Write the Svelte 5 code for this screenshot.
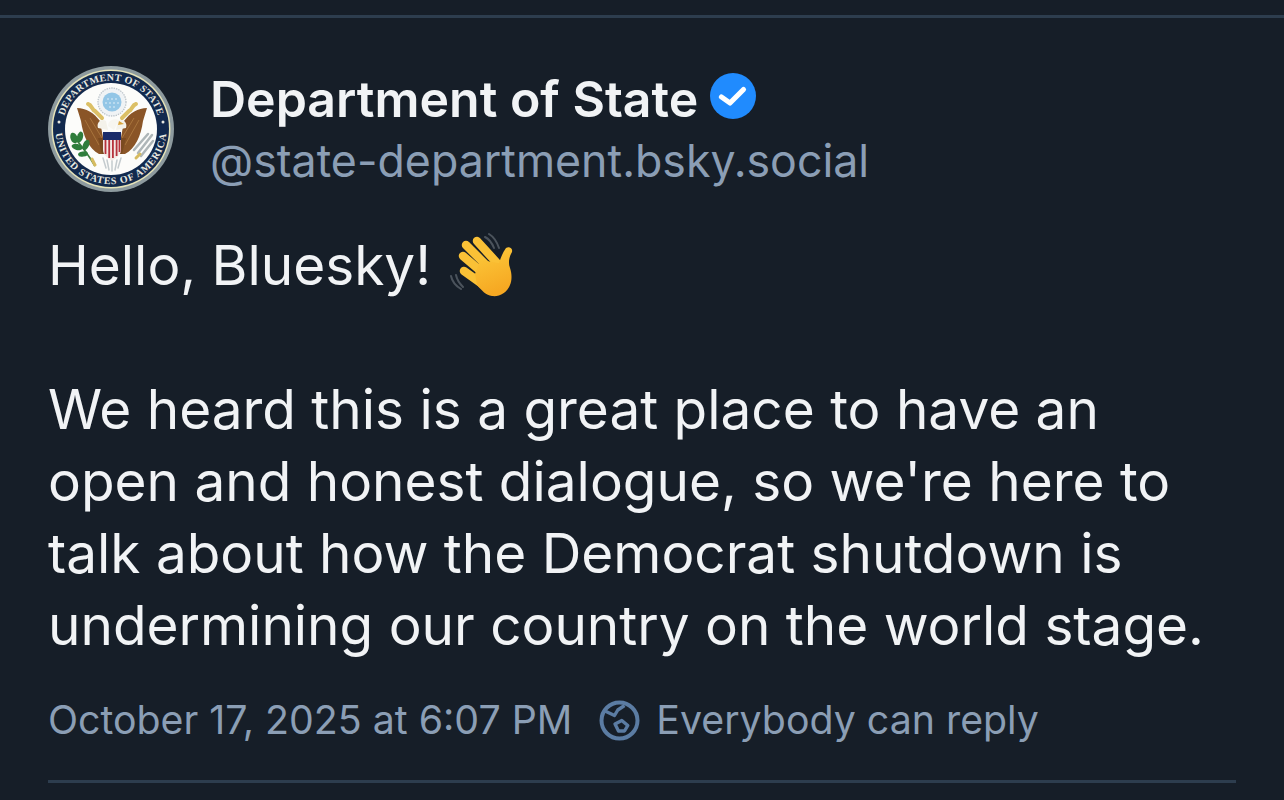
<script>
  const bodyLines = [
    'We heard this is a great place to have an',
    "open and honest dialogue, so we're here to",
    'talk about how the Democrat shutdown is',
    'undermining our country on the world stage.'
  ];
</script>

<main class="page">
  <div class="top-rule"></div>
  <section class="post">
    <header class="author">
      <svg class="seal" viewBox="0 0 126 126" role="img" aria-label="Department of State seal">
        <defs>
          <path id="arcTop" d="M 14.500 63 A 48.500 48.500 0 0 1 111.500 63" />
          <path id="arcBottom" d="M 7.700 58 A 55.500 55.500 0 1 0 118.300 58" />
          <linearGradient id="palm" x1="0" y1="0" x2="0.3" y2="1">
            <stop offset="0" stop-color="#fccb3c" />
            <stop offset="1" stop-color="#f6a822" />
          </linearGradient>
        </defs>
        <circle cx="63" cy="63" r="63" fill="#8d9a9e" />
        <circle cx="63" cy="63" r="59.500" fill="#e6e3b8" />
        <circle cx="63" cy="63" r="58" fill="#12294d" />
        <circle cx="63" cy="63" r="46" fill="#fcfcfa" />
        <text class="seal-text top"><textPath href="#arcTop" startOffset="50%" text-anchor="middle">DEPARTMENT OF STATE</textPath></text>
        <text class="seal-text bottom"><textPath href="#arcBottom" startOffset="50%" text-anchor="middle">UNITED STATES OF AMERICA</textPath></text>
        <circle cx="11" cy="56" r="1.500" fill="#e8e8e0" />
        <circle cx="115" cy="56" r="1.500" fill="#e8e8e0" />

        <circle cx="64" cy="36" r="14" fill="#f0f3f5" stroke="#bcc4ca" stroke-width="1.300" stroke-dasharray="1.400 1" />
        <circle cx="64" cy="36" r="9.500" fill="#93c6e6" />
        <g fill="#eaf4fa">
          <circle cx="60" cy="33" r="0.800" /><circle cx="64" cy="33" r="0.800" /><circle cx="68" cy="33" r="0.800" />
          <circle cx="58" cy="37" r="0.800" /><circle cx="62" cy="37" r="0.800" /><circle cx="66" cy="37" r="0.800" /><circle cx="70" cy="37" r="0.800" />
          <circle cx="62" cy="41" r="0.800" /><circle cx="66" cy="41" r="0.800" />
        </g>

        <path d="M29 42 C38 42 46 47 52 55 L58 88 L51 88 C41 83 35 70 33 55 Z" fill="#8a5527" />
        <path d="M99 42 C90 42 82 47 76 55 L70 88 L77 88 C87 83 93 70 95 55 Z" fill="#8a5527" />
        <path d="M37 54 L51 79 M42 52 L54 72 M91 54 L77 79 M86 52 L74 72" stroke="#a8743c" stroke-width="1" fill="none" />
        <path d="M40 38 C44 39 44 44 47 45 L54 52 M88 38 C84 39 84 44 81 45 L74 52" fill="none" stroke="#dcc066" stroke-width="4" stroke-linecap="round" />
        <path d="M50 62 C48 56 54 52 58 55 L60 64 Z M78 62 C80 56 74 52 70 55 L68 64 Z" fill="#f4f2ea" />
        <path d="M60 60 C60 54 66 52 71 54 L75 57 L69 58 L66 64 Z" fill="#f7f6f0" />
        <path d="M71 55 L76 58 L70 59 Z" fill="#d9a63f" />

        <path d="M50 72 L54 88 L74 88 L78 72 Z" fill="#7a4a20" />
        <rect x="55" y="66" width="18" height="8" fill="#1b2c6a" />
        <path d="M55 74 h18 v10 c0 5 -5 8 -9 11 c-4 -3 -9 -6 -9 -11 z" fill="#f3e8e4" />
        <path d="M57.500 74 v14 M61.200 74 v18 M64.900 74 v18 M68.600 74 v16 M71.500 74 v12" stroke="#b6323c" stroke-width="1.800" />

        <path d="M25 70 C32 78 40 88 47 100" stroke="#3c7d3f" stroke-width="1.800" fill="none" />
        <g fill="#2f7d3c">
          <ellipse cx="26" cy="72" rx="3.500" ry="5.500" transform="rotate(-20 26 72)" />
          <ellipse cx="32" cy="71" rx="3" ry="5.500" transform="rotate(15 32 71)" />
          <ellipse cx="29" cy="81" rx="5.500" ry="3" transform="rotate(15 29 81)" />
          <ellipse cx="38" cy="79" rx="3" ry="5.500" transform="rotate(25 38 79)" />
          <ellipse cx="35" cy="88" rx="5" ry="2.600" transform="rotate(-10 35 88)" />
        </g>
        <path d="M44 93 L47 99" stroke="#d6bb60" stroke-width="3" stroke-linecap="round" />
        <path d="M104 69 L90 87 M100 68 L86 84 M105 75 L93 90" stroke="#aeb6b8" stroke-width="2.500" stroke-linecap="round" />
        <path d="M92 88 L88 92" stroke="#d6bb60" stroke-width="3" stroke-linecap="round" />
        <path d="M55 92 L58 102 M59 94 L61 104 M64 95 L64 105 M69 94 L67 104 M73 92 L70 102" stroke="#c4cbce" stroke-width="1.500" stroke-linecap="round" />
      </svg>
      <div class="identity">
        <div class="name-row">
          <span class="name">Department of State</span>
          <svg class="verified" viewBox="0 0 46 46" aria-hidden="true">
            <circle cx="23" cy="23" r="23" fill="#208bfe" />
            <path d="M11.500 24 L20 30 L33.500 16.500" fill="none" stroke="#fff" stroke-width="5.200" stroke-linecap="round" stroke-linejoin="round" />
          </svg>
        </div>
        <div class="handle">@state-department.bsky.social</div>
      </div>
    </header>

    <div class="content">
      <div class="greeting">
        <span>Hello, Bluesky!</span>
        <svg class="wave" viewBox="0 0 100 90" aria-hidden="true">
          <path d="M54 17 C58 19 61 23 63 28 M58 14 C63 17 66 22 68 28 M25 55 C26 60 29 64 32 67 M20 56 C21 61 25 66 30 69" fill="none" stroke="#4b535c" stroke-width="2" stroke-linecap="round" />
          <g fill="none" stroke="#fac136" stroke-width="8.500" stroke-linecap="round">
            <path d="M46 21 L66 43" />
            <path d="M35 25 L56 46" />
            <path d="M32 36 L52 53" />
            <path d="M33 51 L54 66" />
          </g>
          <path d="M49 40 L68 43 C70 37 72 32 75 28 C78 26 82 28 81 32 C78 37 77 43 79 48 C81 54 81 60 79 65 C76 73 68 77 61 76 C55 75 51 71 46 65 L44 54 Z" fill="url(#palm)" />
        </svg>
      </div>
      <div class="body-text">
        {#each bodyLines as line}
          <div class="line">{line}</div>
        {/each}
      </div>
    </div>

    <footer class="meta">
      <span>October 17, 2025 at 6:07 PM</span>
      <span class="reply">
        <svg class="globe" viewBox="0 0 41 41" aria-hidden="true">
          <g fill="none" stroke="#5b7ca3" stroke-linejoin="round">
            <circle cx="20.500" cy="20.500" r="18" stroke-width="4" />
            <path d="M6 11 L15.500 15.500 L18.800 10 L25.500 5.500" stroke-width="3.400" />
            <path d="M16 24 L22.800 20.500 L28.800 25.500 L25.500 31 L19.500 31 Z" stroke-width="3.400" />
          </g>
        </svg>
        <span>Everybody can reply</span>
      </span>
    </footer>
    <div class="bottom-rule"></div>
  </section>
</main>

<style>
  :global(body) {
    margin: 0;
    background: #161e28;
  }
  .page {
    width: 1284px;
    height: 800px;
    overflow: hidden;
    background: #161e28;
    color: #f1f3f5;
    font-family: Inter, "Liberation Sans", sans-serif;
    padding-top: 15px;
    box-sizing: border-box;
  }
  .top-rule {
    height: 3px;
    background: #2d3d4e;
  }
  .post {
    padding: 48px 48px 0;
  }
  .author {
    display: flex;
    align-items: center;
    gap: 37px;
  }
  .seal {
    width: 126px;
    height: 126px;
    flex: none;
  }
  .seal-text {
    font-family: "Liberation Serif", serif;
    font-size: 10px;
    font-weight: 700;
    fill: #e8e8e0;
  }
  .seal-text.top {
    letter-spacing: 0.3px;
  }
  .seal-text.bottom {
    letter-spacing: 0.8px;
  }
  .identity {
    display: flex;
    flex-direction: column;
    margin-left: -1px;
    padding-top: 2px;
  }
  .name-row {
    display: flex;
    align-items: center;
    gap: 12px;
    height: 62px;
  }
  .name {
    font-size: 50px;
    font-weight: 600;
  }
  .verified {
    width: 46px;
    height: 46px;
    margin-top: -6px;
  }
  .handle {
    font-size: 44.700px;
    line-height: 62px;
    color: #8b9eb5;
  }
  .content {
    margin-top: 37px;
    font-size: 54.900px;
    line-height: 72px;
  }
  .greeting {
    margin: 0 0 72px;
    display: flex;
    align-items: center;
    height: 72px;
  }
  .wave {
    width: 100px;
    height: 90px;
    margin: -9px 0;
    flex: none;
  }
  .line {
    white-space: nowrap;
  }
  .meta {
    display: flex;
    align-items: center;
    gap: 27px;
    margin-top: 34px;
    font-size: 39.300px;
    line-height: 50px;
    color: #8b9eb5;
  }
  .reply {
    display: flex;
    align-items: center;
    gap: 16px;
  }
  .globe {
    width: 41px;
    height: 41px;
    flex: none;
  }
  .bottom-rule {
    height: 3px;
    margin-top: 35px;
    background: #2d3d4e;
  }
</style>
